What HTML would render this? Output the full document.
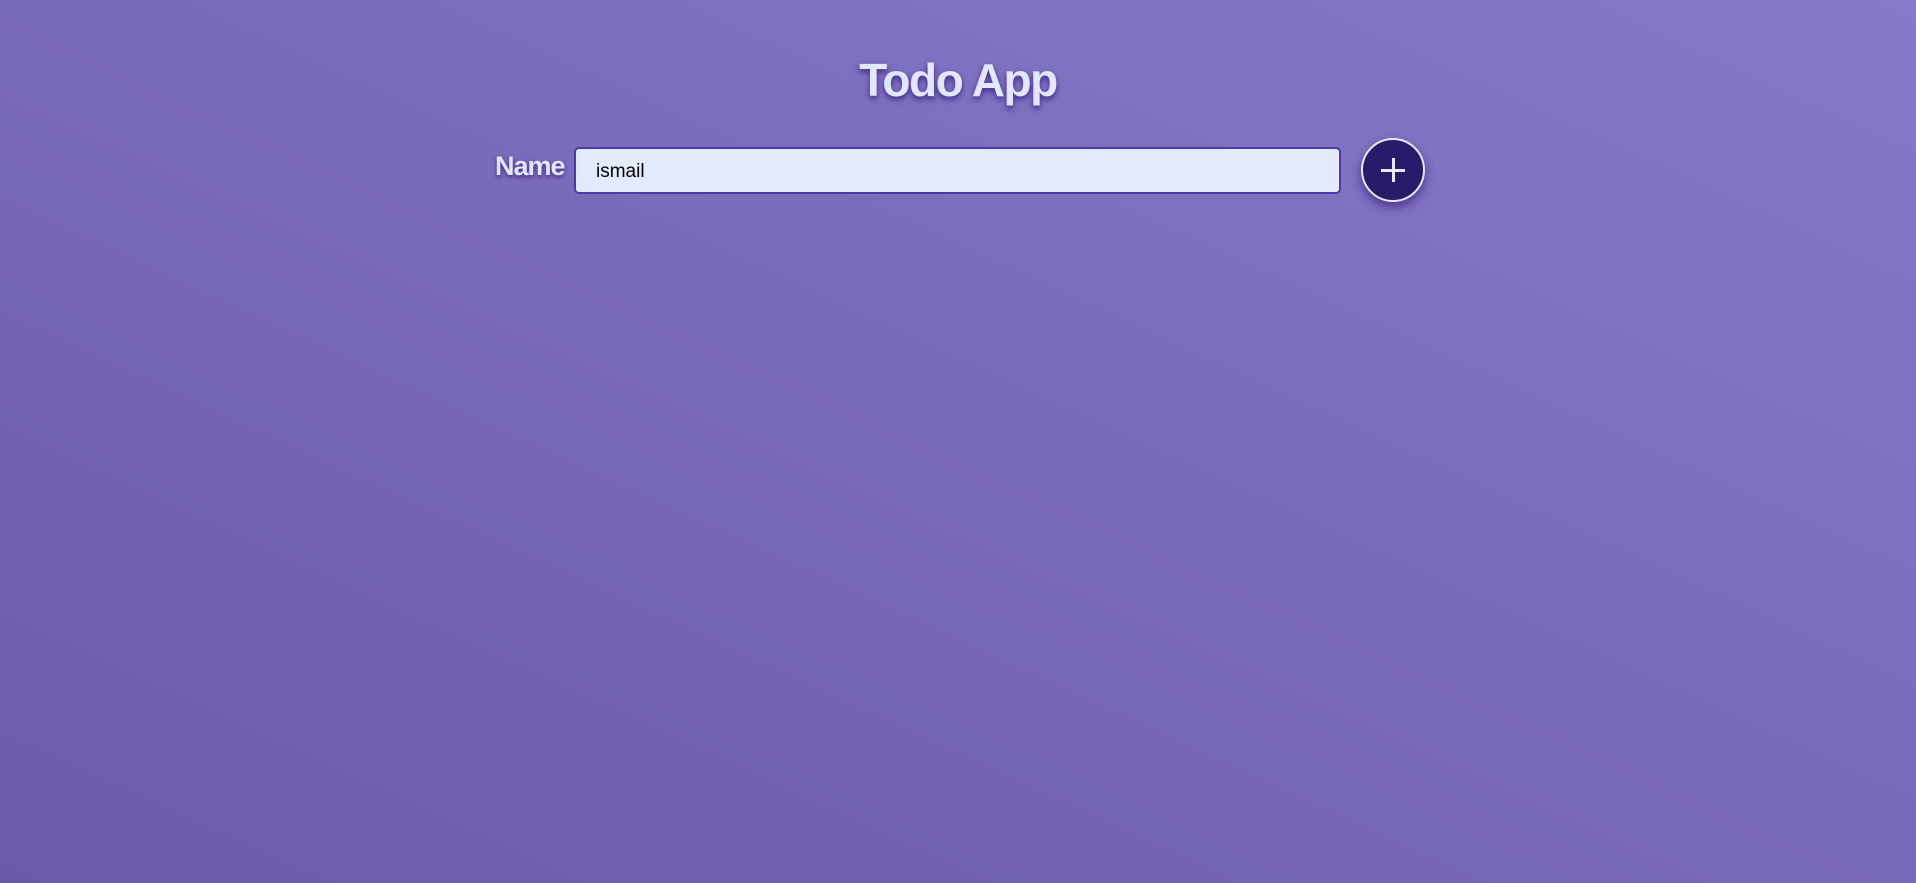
<!DOCTYPE html>
<html><head><style>
html,body{margin:0;height:883px;width:1916px;overflow:hidden}
body{background:linear-gradient(to top right,#6b59a9,#8779c9);font-family:"Liberation Sans",sans-serif;position:relative}
h1{position:absolute;left:0;right:0;top:53px;margin:0;text-align:center;font-size:46px;font-weight:bold;color:#e3e6ff;text-shadow:0 3px 6px #3b2a8a;letter-spacing:-1.5px}
.lbl{position:absolute;left:495px;top:151px;font-size:27px;font-weight:bold;color:#e3e6ff;text-shadow:0 2px 4px #3b2a8a;letter-spacing:-1px}
.inp{position:absolute;left:574px;top:147px;width:763px;height:43px;border:2px solid #4a3aa8;border-radius:5px;background:#e3eafc;box-sizing:content-box}
.inp span{position:absolute;left:20px;top:12px;font-size:19px;color:#000}
.btn{position:absolute;left:1361px;top:138px;width:60px;height:60px;border-radius:50%;background:#261c6a;border:2px solid #e8e8ff;box-shadow:0 5px 10px rgba(40,20,110,.6)}
.btn:before,.btn:after{content:"";position:absolute;background:#e8e8ff;left:50%;top:50%}
.btn:before{width:24px;height:3px;margin:-1.5px 0 0 -12px}
.btn:after{width:3px;height:24px;margin:-12px 0 0 -1.5px}
</style></head><body>
<h1>Todo App</h1>
<div class="lbl">Name</div>
<div class="inp"><span>ismail</span></div>
<div class="btn"></div>
</body></html>
